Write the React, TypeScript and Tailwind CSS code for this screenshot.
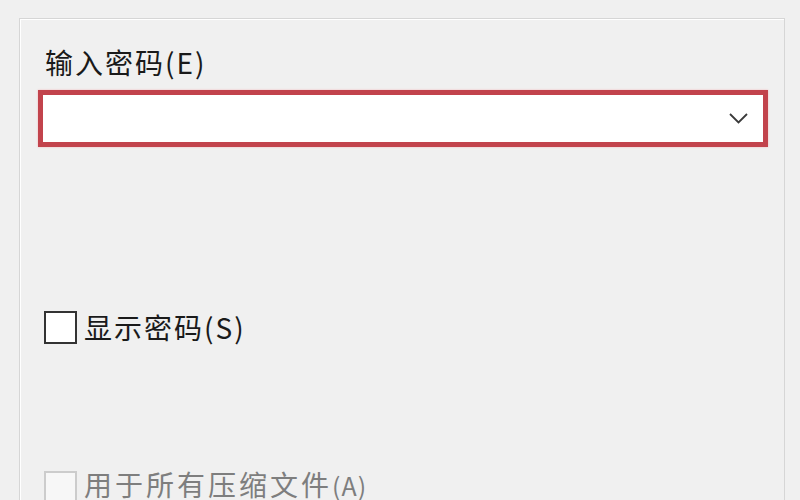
const font = { fontFamily: '"Noto Sans CJK SC", "Noto Sans", sans-serif' };

export default function App() {
  return (
    <div className="h-[500px] w-full overflow-hidden bg-[#f0f0f0] pl-[19px] pr-[15px] pt-[18px]" style={font}>
      <div className="h-[540px] border border-[#d6d6d6] shadow-[inset_1px_1px_0_#ffffff] pl-[18px] pr-[16px] pt-[25px]">
        <div className="ml-[7px] text-[28px] leading-[36px] tracking-[2px] text-[#1a1a1a]">输入密码(E)</div>

        <div className="mt-[10px] flex h-[57px] items-center justify-end border-[5px] border-[#c2434c] bg-white pr-[15px] shadow-[0_0_2px_#f2b8bc]">
          <svg width="19" height="11" viewBox="0 0 19 11" fill="none">
            <polyline points="1,1 9.5,9.5 18,1" stroke="#3a3a3a" strokeWidth="1.8" />
          </svg>
        </div>

        <label className="mt-[162px] ml-[6px] flex items-center gap-[7px]">
          <span className="block h-[33px] w-[33px] border-[2.5px] border-[#333] bg-white" />
          <span className="text-[28px] leading-[36px] tracking-[2px] text-[#1a1a1a]">显示密码(S)</span>
        </label>

        <label className="mt-[126px] ml-[6px] flex items-start gap-[7px]">
          <span className="block h-[33px] w-[33px] border-2 border-[#cccccc] bg-[#f7f7f7]" />
          <span className="-mt-[5px] text-[28px] leading-[36px] tracking-[3px] text-[#7e7e7e]">
            用于所有压缩文件<span className="text-[25px] tracking-[1px]">(A)</span>
          </span>
        </label>
      </div>
    </div>
  );
}
